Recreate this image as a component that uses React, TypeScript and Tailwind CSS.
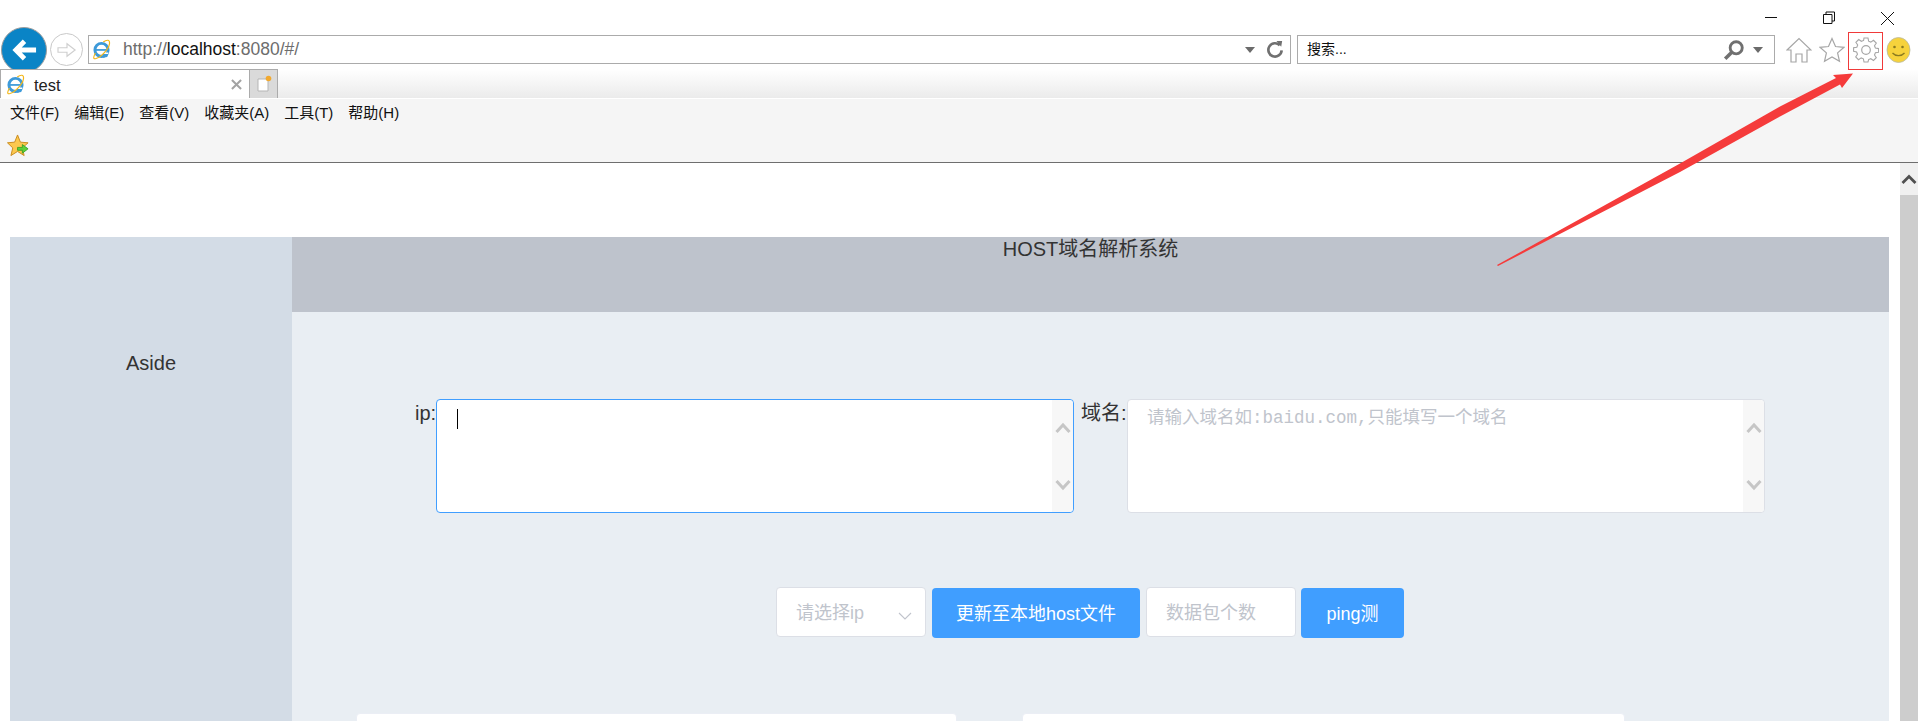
const cjk = "font-['Liberation_Sans','Noto_Sans_CJK_SC',sans-serif]";

const IeLogo = ({ className }: { className: string }) => (
  <svg viewBox="0 0 24 24" className={className}>
    <circle cx="12" cy="12.5" r="7.5" fill="none" stroke="#3d9ad9" strokeWidth="3.4" />
    <path d="M5 11.5h14v2H5z" fill="#3d9ad9" />
    <path d="M13 15.5h7l-1 3h-6z" fill="#fff" />
    <path d="M13.5 17h6.5l-1.5 3.5-5 1z" fill="#3d9ad9" />
    <path d="M5 16C3 20 2 23 5 22.5c3-.5 9-5 13-10S22 2 19.5 1.5C18 1.200 16 2 14 3.500" fill="none" stroke="#f2b619" strokeWidth="1.300" />
  </svg>
);

const ScrollArrows = () => (
  <div className="flex w-[21px] shrink-0 flex-col items-center justify-between rounded-r bg-[#f7f7f7] pt-[22px] pb-[21px]">
    <svg viewBox="0 0 16 12" className="h-[12px] w-[16px]">
      <path d="M1.500 10L8 3l6.500 7" fill="none" stroke="#c6c6c6" strokeWidth="3" />
    </svg>
    <svg viewBox="0 0 16 12" className="h-[12px] w-[16px]">
      <path d="M1.500 2L8 9l6.500-7" fill="none" stroke="#c6c6c6" strokeWidth="3" />
    </svg>
  </div>
);

const BrowserChrome = () => (
  <div className="relative">
    {/* window controls */}
    <div className="flex h-[35px] justify-end">
      <svg viewBox="0 0 153 35" className="h-[35px] w-[153px]">
        <path d="M0 17.500h12" stroke="#111" strokeWidth="1" />
        <path d="M58.500 14.500h8.500v9h-8.500zM61 14.500v-2.500h8.500v9H67" fill="none" stroke="#111" strokeWidth="1" />
        <path d="M116 12l13 13M129 12l-13 13" stroke="#111" strokeWidth="1" />
      </svg>
    </div>

    {/* address row */}
    <div className="flex h-[29px] items-center">
      <div className="ml-[1px] flex h-[46px] w-[46px] shrink-0 items-center justify-center rounded-full border border-[#9d9d9d] bg-[#0a84c6]">
        <svg viewBox="0 0 28 24" className="h-[24px] w-[27px]">
          <path d="M26 12H6M14 3l-9 9 9 9" fill="none" stroke="#fff" strokeWidth="5" />
        </svg>
      </div>
      <div className="ml-[3px] flex h-[33px] w-[33px] shrink-0 items-center justify-center rounded-full border border-[#c9c9c9] bg-white">
        <svg viewBox="0 0 24 20" className="h-[18px] w-[22px]">
          <path d="M2 7.500h10V3l9 7-9 7v-4.500H2z" fill="none" stroke="#cfcfcf" strokeWidth="1.300" />
        </svg>
      </div>
      <div className="ml-[5px] flex h-[29px] w-[1203px] shrink-0 items-center border border-[#ababab] bg-white pr-[5px] pl-[2px]">
        <IeLogo className="h-[21px] w-[21px] shrink-0" />
        <span className={`ml-[11px] flex-1 text-[17.500px] text-[#6d6d6d] ${cjk}`}>
          http://<span className="text-[#111]">localhost</span>:8080/#/
        </span>
        <svg viewBox="0 0 10 6" className="mr-[11px] h-[6px] w-[10px]">
          <path d="M0 0h10L5 6z" fill="#6b6b6b" />
        </svg>
        <svg viewBox="0 0 20 20" className="h-[21px] w-[19px]">
          <path d="M14.500 5.500A7 7 0 1 0 16.500 11" fill="none" stroke="#707070" strokeWidth="2.800" />
          <path d="M11 1l6 0-1 6z" fill="#707070" />
        </svg>
      </div>
      <div className="ml-[6px] flex h-[29px] w-[478px] shrink-0 items-center border border-[#ababab] bg-white pr-[11px] pl-[9px]">
        <span className={`flex-1 text-[14px] text-[#111] ${cjk}`}>搜索...</span>
        <svg viewBox="0 0 20 20" className="mr-[8px] h-[22px] w-[22px]">
          <circle cx="12" cy="8" r="5.500" fill="none" stroke="#707070" strokeWidth="2.600" />
          <path d="M8 12l-6 6" stroke="#707070" strokeWidth="3.200" />
        </svg>
        <svg viewBox="0 0 10 6" className="h-[6px] w-[10px]">
          <path d="M0 0h10L5 6z" fill="#6b6b6b" />
        </svg>
      </div>
      <div className="ml-[11px] flex items-center">
        <svg viewBox="0 0 26 26" className="h-[26px] w-[26px]">
          <path d="M1 13L13 1.500 25 13h-4v12h-5v-8h-6v8H5V13z" fill="#fff" stroke="#a6a6a6" strokeWidth="1.200" />
        </svg>
        <svg viewBox="0 0 26 26" className="ml-[7px] h-[26px] w-[26px]">
          <path d="M13 1.500l3.500 8 8.500.8-6.400 5.600 1.900 8.400L13 20l-7.500 4.300 1.900-8.400L1 10.300l8.500-.8z" fill="#fff" stroke="#a6a6a6" strokeWidth="1.200" />
        </svg>
        <svg viewBox="0 0 26 26" className="ml-[8px] h-[26px] w-[26px]">
          <path d="M11 1h4l.6 3.200 2.200.9 2.700-1.800 2.800 2.800-1.800 2.700.9 2.200 3.200.6v3.600l-3.200.6-.9 2.200 1.800 2.700-2.800 2.800-2.700-1.800-2.200.9L15 25h-4l-.6-3.200-2.200-.9-2.700 1.800-2.800-2.800 1.800-2.700-.9-2.200L0.600 14.400v-3.600l3.200-.6.9-2.200L2.900 5.300l2.800-2.800 2.700 1.800 2.200-.9z" fill="#fff" stroke="#a6a6a6" strokeWidth="1.100" />
          <circle cx="13" cy="13" r="4.300" fill="#fff" stroke="#a6a6a6" strokeWidth="1.200" />
        </svg>
        <svg viewBox="0 0 24 26" className="ml-[7px] h-[26px] w-[25px]">
          <ellipse cx="12" cy="13" rx="11.500" ry="12.500" fill="#f6d23c" stroke="#b9b9a0" strokeWidth="0.800" />
          <circle cx="8" cy="10" r="1.300" fill="#8a7a20" />
          <circle cx="16" cy="10" r="1.300" fill="#8a7a20" />
          <path d="M6 16c3 3.500 9 3.500 12 0" fill="none" stroke="#8a7a20" strokeWidth="1.300" />
        </svg>
      </div>
    </div>

    {/* tab row */}
    <div className="relative mt-[5px] flex h-[29px] bg-gradient-to-b from-white to-[#ebebeb]">
      <div className="flex h-[29px] w-[250px] shrink-0 items-center border-t border-r border-l border-[#ababab] bg-white pr-[7px] pl-[4px]">
        <IeLogo className="h-[21px] w-[21px] shrink-0" />
        <span className={`ml-[8px] flex-1 pt-[2px] text-[16.500px] text-[#222] ${cjk}`}>test</span>
        <svg viewBox="0 0 12 12" className="h-[11px] w-[11px]">
          <path d="M1 1l10 10M11 1L1 11" stroke="#a3a3a3" strokeWidth="2.200" />
        </svg>
      </div>
      <div className="flex h-[29px] w-[28px] shrink-0 items-center justify-center border-t border-r border-[#ababab] bg-[#dadada]">
        <svg viewBox="0 0 16 18" className="h-[18px] w-[16px]">
          <path d="M2 4h10v12H2z" fill="#fff" stroke="#b5b5b5" strokeWidth="1" />
          <circle cx="12.500" cy="3.500" r="2.800" fill="#f2a92f" />
        </svg>
      </div>
      <div className="flex-1" />
    </div>

    {/* menu + favorites */}
    <div className="mt-[1px] h-[64px] border-b border-[#6e6e6e] bg-[#f5f5f5]">
      <div className={`flex h-[28px] items-center gap-[15px] pl-[10px] text-[15px] text-[#111] ${cjk}`}>
        <span>文件(F)</span>
        <span>编辑(E)</span>
        <span>查看(V)</span>
        <span>收藏夹(A)</span>
        <span>工具(T)</span>
        <span>帮助(H)</span>
      </div>
      <svg viewBox="0 0 24 24" className="mt-[7px] ml-[7px] h-[23px] w-[23px]">
        <path d="M11 1l3 7.500 8 .7-6 5.300 1.900 8L11 18.200 4.100 22.500 6 14.500 0.500 9.200l7.500-.7z" fill="#fcc84e" stroke="#c98a1d" strokeWidth="1" />
        <path d="M11 14h5v-3l6 4.500-6 4.500v-3h-5z" fill="#5ed03a" stroke="#2e9a1e" strokeWidth="0.800" />
      </svg>
    </div>
  </div>
);

const Scrollbar = () => (
  <div className="flex w-[18px] shrink-0 flex-col">
    <div className="flex h-[32px] items-center justify-center bg-[#f0f0f0]">
      <svg viewBox="0 0 16 10" className="h-[10px] w-[16px]">
        <path d="M1.500 9L8 2.500 14.500 9" fill="none" stroke="#505050" strokeWidth="2.800" />
      </svg>
    </div>
    <div className="flex-1 bg-[#cdcdcd]" />
  </div>
);

const Main = () => (
  <div className="flex-1 bg-[#e9eef3] pt-[87px]">
    <div className="flex h-[114px] pl-[123px]">
      <span className="w-[21px] shrink-0 text-[20px] leading-[28px] text-[#333]">ip:</span>
      <div className="flex w-[638px] shrink-0 rounded border border-[#409eff] bg-white">
        <div className="flex-1 pt-[9px] pl-[20px]">
          <div className="h-[20px] w-[1px] bg-black" />
        </div>
        <ScrollArrows />
      </div>
      <span className="ml-[7px] w-[46px] shrink-0 text-[20px] leading-[28px] text-[#333]">域名:</span>
      <div className="flex w-[638px] shrink-0 rounded border border-[#dcdfe6] bg-white">
        <div className="flex-1 pt-[6px] pl-[19px] font-['Liberation_Mono','Noto_Sans_CJK_SC',monospace] text-[17.500px] leading-[24px] text-[#c0c4cc]">
          请输入域名如:baidu.com,只能填写一个域名
        </div>
        <ScrollArrows />
      </div>
    </div>

    <div className="mt-[74px] ml-[484px] flex h-[50px] items-start gap-[6px] text-[18px]">
      <div className="flex h-[50px] w-[150px] items-center justify-between rounded border border-[#dcdfe6] bg-white pt-[2px] pr-[13px] pl-[19px] text-[#c0c4cc]">
        <span>请选择ip</span>
        <svg viewBox="0 0 14 8" className="mt-[6px] h-[8px] w-[14px]">
          <path d="M1 1l6 6 6-6" fill="none" stroke="#c0c4cc" strokeWidth="1.100" />
        </svg>
      </div>
      <div className="mt-[1px] flex h-[50px] w-[208px] items-center justify-center rounded bg-[#409eff] pt-[2px] text-white">
        更新至本地host文件
      </div>
      <div className="flex h-[50px] w-[150px] items-center rounded border border-[#dcdfe6] bg-white pt-[2px] pl-[19px] text-[#c0c4cc]">
        数据包个数
      </div>
      <div className="-ml-px mt-[1px] flex h-[50px] w-[103px] items-center justify-center rounded bg-[#409eff] pt-[2px] text-white">
        ping测
      </div>
    </div>

    <div className="mt-[76px] ml-[64px] flex gap-[65px]">
      <div className="h-[60px] w-[601px] rounded border border-[#ebeef5] bg-white" />
      <div className="h-[60px] w-[603px] rounded border border-[#ebeef5] bg-white" />
    </div>
  </div>
);

export default function App() {
  return (
    <div className={`relative flex h-[721px] flex-col overflow-hidden bg-white ${cjk}`}>
      <BrowserChrome />

      <div className="flex min-h-0 flex-1">
        <div className="flex flex-1 flex-col pt-[74px] pl-[10px]">
          <div className="flex flex-1 pr-[11px]">
            <aside className="w-[282px] shrink-0 bg-[#d3dce6] pt-[113px] text-center text-[20px] leading-[26px] text-[#333]">
              Aside
            </aside>
            <div className="flex flex-1 flex-col">
              <header className="h-[75px] shrink-0 bg-[#bec3cc] text-center text-[20px] leading-[24px] text-[#333]">
                HOST域名解析系统
              </header>
              <Main />
            </div>
          </div>
        </div>
        <Scrollbar />
      </div>

      {/* annotation over the screenshot */}
      <div className="absolute top-[32px] left-[1848px] h-[38px] w-[35px] border border-[#f03a3a]" />
      <svg viewBox="0 0 1918 721" className="pointer-events-none absolute inset-0 h-[721px] w-[1918px]">
        <path d="M1497 265L1680 163.500L1780 106.500L1836 78L1833 75L1853 73.500L1842 88L1840 84.500L1780 116.500L1680 172L1498 266z" fill="#f53b3b" />
      </svg>
    </div>
  );
}
